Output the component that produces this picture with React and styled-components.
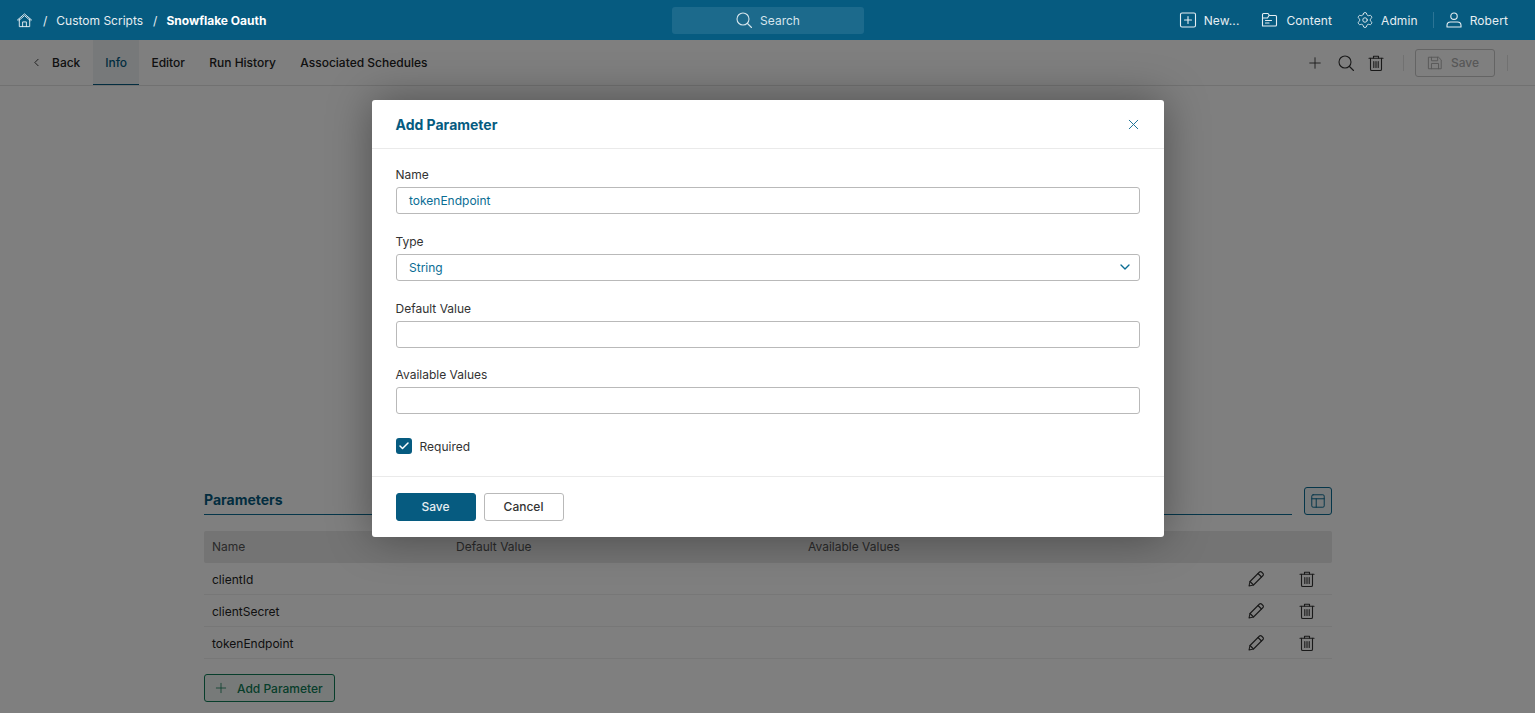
import React from 'react'
import styled, { createGlobalStyle } from 'styled-components'
import { Plus, X, ChevronDown, ChevronLeft, Check, Settings } from 'lucide-react'

const Global = createGlobalStyle`
  html, body { margin: 0; height: 100%; overflow: hidden; }
  body { font-family: Inter, "Liberation Sans", sans-serif; font-size: 12px; color: #222; background: #fff; }
  * { box-sizing: border-box; }
`

const Page = styled.div`
  position: relative;
  height: 713px;
  overflow: hidden;
  display: flex;
  flex-direction: column;
`

const TopBar = styled.header`
  position: relative;
  z-index: 3;
  flex: 0 0 40px;
  background: #065b80;
  color: #e6eef2;
  display: grid;
  grid-template-columns: 1fr 192px 1fr;
  align-items: center;
  padding: 0 16px;
`

const Crumbs = styled.div`
  display: flex;
  align-items: center;
`

const Slash = styled.span`
  margin: 0 9px 0 10px;
`

const CrumbNow = styled.span`
  font-weight: 700;
  color: #fff;
`

const SearchBox = styled.div`
  height: 27px;
  background: #1c6a8c;
  border-radius: 3px;
  display: flex;
  align-items: center;
  justify-content: center;
  gap: 7px;
  color: #d5e5ec;
`

const TopMenu = styled.div`
  display: flex;
  justify-content: flex-end;
  align-items: center;
  padding-right: 11px;
  letter-spacing: 0.1px;
`

const TopItem = styled.div`
  display: flex;
  align-items: center;
  gap: 7px;
  margin-left: ${(p) => p.$gap || 23}px;
`

const TopDivider = styled.div`
  width: 1px;
  height: 16px;
  background: #2c7495;
  margin-left: 15px;
`

const SubBar = styled.nav`
  flex: 0 0 46px;
  border-bottom: 1px solid #e2e2e2;
  display: flex;
  align-items: stretch;
  padding: 0 27px 0 30px;
`

const Back = styled.div`
  display: flex;
  align-items: center;
  gap: 9px;
  width: 63px;
  font-weight: 500;
`

const Tab = styled.div`
  display: flex;
  align-items: center;
  padding: 0 12.15px;
  font-weight: 500;
  color: ${(p) => (p.$active ? '#065b80' : '#222')};
  background: ${(p) => (p.$active ? '#eef3f5' : 'transparent')};
  border-bottom: 1px solid ${(p) => (p.$active ? '#065b80' : 'transparent')};
`

const SubActions = styled.div`
  margin-left: auto;
  display: flex;
  align-items: center;
  color: #333;
`

const IconSlot = styled.span`
  display: flex;
  margin-right: ${(p) => p.$gap || 0}px;
`

const SubDivider = styled.div`
  width: 1px;
  height: 16px;
  background: #e2e2e2;
  margin-left: ${(p) => p.$left || 0}px;
  margin-right: ${(p) => p.$right || 0}px;
`

const DisabledSave = styled.button`
  width: 80px;
  height: 28px;
  padding: 0 4px 0 0;
  background: #fff;
  border: 1px solid #c8c8c8;
  border-radius: 3px;
  color: #b0b0b0;
  font: inherit;
  font-weight: 500;
  display: flex;
  align-items: center;
  justify-content: center;
  gap: 8px;
`

const Content = styled.main`
  padding: 401px 203px 0 204px;
`

const SectionHead = styled.div`
  display: flex;
  align-items: flex-start;
  gap: 12px;
`

const SectionTitle = styled.h3`
  flex: 1;
  margin: 0;
  height: 28px;
  border-bottom: 1px solid #0a6d94;
  color: #065b80;
  font-size: 14px;
  font-weight: 700;
  line-height: 26px;
`

const LayoutButton = styled.button`
  width: 28px;
  height: 28px;
  padding: 0;
  background: #eef4f6;
  border: 1px solid #0a6d94;
  border-radius: 3px;
  color: #0a6d94;
  display: flex;
  align-items: center;
  justify-content: center;
`

const Table = styled.div`
  margin-top: 16px;
`

const HeadRow = styled.div`
  height: 32px;
  background: #e8e8e8;
  border-radius: 2px;
  display: grid;
  grid-template-columns: 244px 352px 1fr;
  align-items: center;
  padding: 0 0 1px 8px;
  color: #555;
`

const Row = styled.div`
  height: 32px;
  border-bottom: 1px solid #eee;
  display: flex;
  align-items: center;
  padding: 0 16px 0 8px;
`

const RowName = styled.span`
  flex: 1;
  padding-top: 2px;
`

const RowIcons = styled.div`
  display: flex;
  align-items: center;
  gap: 33px;
  color: #333;
`

const AddButton = styled.button`
  margin-top: 15px;
  width: 131px;
  height: 28px;
  padding: 0 0 0 8px;
  background: #eef5f2;
  border: 1px solid #0e7c56;
  border-radius: 3px;
  color: #0e7c56;
  font: inherit;
  font-weight: 500;
  display: flex;
  align-items: center;
  gap: 8px;
`

const Overlay = styled.div`
  position: absolute;
  inset: 0;
  z-index: 2;
  background: rgba(0, 0, 0, 0.5);
  display: flex;
  justify-content: center;
  align-items: flex-start;
  padding-top: 100px;
`

const Dialog = styled.section`
  width: 792px;
  height: 437px;
  background: #fff;
  border-radius: 3px;
  box-shadow: 0 0 44px rgba(0, 0, 0, 0.38);
  display: flex;
  flex-direction: column;
`

const DialogHead = styled.div`
  flex: 0 0 49px;
  border-bottom: 1px solid #eaeaea;
  display: flex;
  align-items: center;
  justify-content: space-between;
  padding: 0 22px 0 24px;
  color: #065b80;
`

const CloseIcon = styled.span`
  display: flex;
  color: #1f7396;
`

const DialogTitle = styled.h2`
  margin: 0;
  font-size: 14px;
  font-weight: 700;
`

const DialogBody = styled.div`
  flex: 1;
  padding: 18px 24px 0;
  border-bottom: 1px solid #eaeaea;
`

const Field = styled.div`
  margin-bottom: 19.8px;
`

const Label = styled.div`
  height: 16px;
  line-height: 16px;
  margin-bottom: 4px;
  color: #333;
`

const InputBox = styled.div`
  height: 27px;
  border: 1px solid #b9b9b9;
  border-radius: 3px;
  display: flex;
  align-items: center;
  justify-content: space-between;
  padding: 0 6px 0 12.5px;
  color: #0a6d94;
`

const Required = styled.div`
  display: flex;
  align-items: center;
  gap: 8px;
  margin-top: 24px;
  color: #333;
`

const CheckBox = styled.span`
  width: 16px;
  height: 16px;
  border-radius: 3px;
  background: #065b80;
  color: #fff;
  display: flex;
  align-items: center;
  justify-content: center;
`

const DialogFoot = styled.div`
  flex: 0 0 60px;
  display: flex;
  align-items: center;
  gap: 8px;
  padding: 0 24px;
`

const FootButton = styled.button`
  width: 80px;
  height: 28px;
  padding: 0 0 1px;
  border-radius: 3px;
  font: inherit;
  font-weight: 500;
  border: 1px solid ${(p) => (p.$primary ? '#065b80' : '#b9b9b9')};
  background: ${(p) => (p.$primary ? '#065b80' : '#fff')};
  color: ${(p) => (p.$primary ? '#e6eef2' : '#333')};
`

const Ico = ({ size = 18, children, sw = 1.1 }) => (
  <svg width={size} height={size} viewBox="0 0 18 18" fill="none" stroke="currentColor" strokeWidth={sw} strokeLinecap="round" strokeLinejoin="round">
    {children}
  </svg>
)

const HomeIcon = () => (
  <Ico size={17} sw={1}>
    <path d="M1.5 8.5 9 2l7.5 6.5" />
    <path d="M3.5 7.5V15.5h11V7.5" />
    <path d="M7 15.5v-5h4v5" />
    <path d="M3 9 9 3.8 15 9" />
  </Ico>
)

const NewIcon = () => (
  <Ico>
    <rect x="1.5" y="2" width="15" height="14" rx="1.5" />
    <path d="M9 5.5v7M5.5 9h7" />
  </Ico>
)

const FolderIcon = () => (
  <Ico>
    <path d="M1.5 15V3.5a1 1 0 0 1 1-1h4.5l1.5 2h6a1 1 0 0 1 1 1V14a1 1 0 0 1-1 1z" />
    <path d="M1.5 7h5l1.5-2.5" />
    <path d="M4.5 9.5h6M4.5 12h3.5" />
  </Ico>
)

const UserIcon = () => (
  <Ico>
    <circle cx="9" cy="5.2" r="3.2" />
    <path d="M2 16v-1.5A3.5 3.5 0 0 1 5.5 11h7a3.5 3.5 0 0 1 3.5 3.5V16z" />
  </Ico>
)

const SearchIcon = ({ size = 18 }) => (
  <Ico size={size}>
    <circle cx="8" cy="8" r="6" />
    <path d="m12.5 12.5 4 4" />
  </Ico>
)

const TrashIcon = () => (
  <Ico>
    <path d="M2 4.2h14" />
    <path d="M6.5 4V2.2h5V4" />
    <path d="M3.5 4.2v11a1.3 1.3 0 0 0 1.3 1.3h8.4a1.3 1.3 0 0 0 1.3-1.3v-11" />
    <path d="M6.8 7.5v6M9 7.5v6M11.2 7.5v6" />
  </Ico>
)

const PencilIcon = () => (
  <Ico>
    <path d="M2 16l1-4.5L12.5 2a1.4 1.4 0 0 1 2 0l1.5 1.5a1.4 1.4 0 0 1 0 2L6.5 15z" />
    <path d="m11 3.5 3.5 3.5M3 11.5 6.5 15" />
  </Ico>
)

const SaveIcon = () => (
  <Ico size={16}>
    <path d="M2 2.5h11l3 3v10H2z" />
    <path d="M5 2.5v4h7v-4M5 15.5v-6h8v6" />
  </Ico>
)

const TableIcon = () => (
  <Ico size={16}>
    <rect x="2" y="2" width="14" height="14" rx="1.5" />
    <path d="M2 6.5h14M7 6.5V16" />
  </Ico>
)

const params = ['clientId', 'clientSecret', 'tokenEndpoint']

export default function App() {
  return (
    <Page>
      <Global />
      <TopBar>
        <Crumbs>
          <HomeIcon />
          <Slash>/</Slash>
          <span>Custom Scripts</span>
          <Slash>/</Slash>
          <CrumbNow>Snowflake Oauth</CrumbNow>
        </Crumbs>
        <SearchBox>
          <SearchIcon />
          <span>Search</span>
        </SearchBox>
        <TopMenu>
          <TopItem><NewIcon /><span>New...</span></TopItem>
          <TopItem $gap={22}><FolderIcon /><span>Content</span></TopItem>
          <TopItem $gap={24}><Settings size={18} strokeWidth={1.2} /><span>Admin</span></TopItem>
          <TopDivider />
          <TopItem $gap={11}><UserIcon /><span>Robert</span></TopItem>
        </TopMenu>
      </TopBar>

      <SubBar>
        <Back><ChevronLeft size={13} strokeWidth={1.6} /><span>Back</span></Back>
        <Tab $active>Info</Tab>
        <Tab>Editor</Tab>
        <Tab>Run History</Tab>
        <Tab>Associated Schedules</Tab>
        <SubActions>
          <IconSlot $gap={13}><Plus size={18} strokeWidth={1.2} /></IconSlot>
          <IconSlot $gap={12}><SearchIcon /></IconSlot>
          <IconSlot><TrashIcon /></IconSlot>
          <SubDivider $left={18} $right={11} />
          <DisabledSave><SaveIcon /><span>Save</span></DisabledSave>
          <SubDivider $left={12} />
        </SubActions>
      </SubBar>

      <Content>
        <SectionHead>
          <SectionTitle>Parameters</SectionTitle>
          <LayoutButton><TableIcon /></LayoutButton>
        </SectionHead>
        <Table>
          <HeadRow>
            <span>Name</span>
            <span>Default Value</span>
            <span>Available Values</span>
          </HeadRow>
          {params.map((name) => (
            <Row key={name}>
              <RowName>{name}</RowName>
              <RowIcons>
                <PencilIcon />
                <TrashIcon />
              </RowIcons>
            </Row>
          ))}
        </Table>
        <AddButton><Plus size={16} strokeWidth={1.2} /><span>Add Parameter</span></AddButton>
      </Content>

      <Overlay>
        <Dialog>
          <DialogHead>
            <DialogTitle>Add Parameter</DialogTitle>
            <CloseIcon><X size={17} strokeWidth={1.4} /></CloseIcon>
          </DialogHead>
          <DialogBody>
            <Field>
              <Label>Name</Label>
              <InputBox>tokenEndpoint</InputBox>
            </Field>
            <Field>
              <Label>Type</Label>
              <InputBox>String<ChevronDown size={16} strokeWidth={2} /></InputBox>
            </Field>
            <Field>
              <Label>Default Value</Label>
              <InputBox />
            </Field>
            <Field>
              <Label>Available Values</Label>
              <InputBox />
            </Field>
            <Required>
              <CheckBox><Check size={12} strokeWidth={3} /></CheckBox>
              <span>Required</span>
            </Required>
          </DialogBody>
          <DialogFoot>
            <FootButton $primary>Save</FootButton>
            <FootButton>Cancel</FootButton>
          </DialogFoot>
        </Dialog>
      </Overlay>
    </Page>
  )
}
